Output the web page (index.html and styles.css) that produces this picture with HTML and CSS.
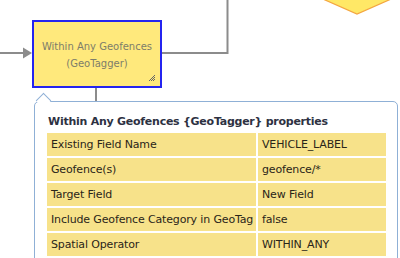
FILE: index.html
```html
<!DOCTYPE html>
<html>
<head>
<meta charset="utf-8">
<link rel="stylesheet" href="styles.css">
</head>
<body>
<div class="canvas">
  <svg class="wires" width="400" height="258" viewBox="0 0 400 258">
    <polygon class="diamond" points="316,-4 357,14 398,-4"/>
    <line class="wire" x1="0" y1="53" x2="25" y2="53"/>
    <polygon class="arrow" points="23,47.5 32,53 23,58.5"/>
    <polyline class="wire" points="162,53 227.5,53 227.5,0"/>
    <line class="wire" x1="96" y1="88" x2="96" y2="102"/>
  </svg>
  <div class="node">
    <div class="node-label">Within Any Geofences<br>(GeoTagger)</div>
    <svg class="grip" width="8" height="8" viewBox="0 0 8 8">
      <path d="M7 1 L1 7 M7 3 L3 7 M7 5 L5 7" stroke="#666" stroke-width="1"/>
    </svg>
  </div>
  <div class="popup">
    <div class="caret"></div>
    <div class="popup-title">Within Any Geofences {GeoTagger} properties</div>
    <table class="props">
      <colgroup><col class="c1"><col class="c2"></colgroup>
      <tr><td>Existing Field Name</td><td>VEHICLE_LABEL</td></tr>
      <tr><td>Geofence(s)</td><td>geofence/*</td></tr>
      <tr><td>Target Field</td><td>New Field</td></tr>
      <tr><td>Include Geofence Category in GeoTag</td><td>false</td></tr>
      <tr><td>Spatial Operator</td><td>WITHIN_ANY</td></tr>
      <tr><td></td><td></td></tr>
    </table>
  </div>
</div>
</body>
</html>
```
FILE: styles.css
```css
html, body {
  margin: 0;
  padding: 0;
  background: #fff;
  overflow: hidden;
}
.canvas {
  position: relative;
  width: 400px;
  height: 258px;
  overflow: hidden;
  font-family: "DejaVu Sans", Verdana, sans-serif;
}
.wires {
  position: absolute;
  left: 0;
  top: 0;
}
.wire {
  stroke: #8c8c8c;
  stroke-width: 2;
  fill: none;
}
.arrow {
  fill: #8c8c8c;
}
.diamond {
  fill: #ffe866;
  stroke: #f4a640;
  stroke-width: 1.2;
}
.node {
  position: absolute;
  left: 32px;
  top: 20px;
  width: 126px;
  height: 64px;
  border: 2px solid #2424f0;
  background: #ffe97c;
  display: flex;
  align-items: center;
  justify-content: center;
}
.node-label {
  color: #7d7d6a;
  font-size: 10px;
  line-height: 17px;
  text-align: center;
  margin-top: 2px;
}
.grip {
  position: absolute;
  right: 4px;
  bottom: 4px;
}
.popup {
  position: absolute;
  left: 34px;
  top: 101px;
  width: 362px;
  height: 200px;
  border: 1px solid #8fb0d6;
  border-radius: 5px;
  background: #fff;
}
.caret {
  position: absolute;
  left: 3px;
  top: -7px;
  width: 10px;
  height: 10px;
  background: #fff;
  border-left: 1px solid #8fb0d6;
  border-top: 1px solid #8fb0d6;
  transform: rotate(45deg);
}
.popup-title {
  margin: 13px 0 0 13px;
  font-weight: bold;
  font-size: 11px;
  color: #2d3142;
  letter-spacing: -0.25px;
}
.props {
  margin: 3px 0 0 10px;
  border-collapse: separate;
  border-spacing: 2px 2.25px;
  table-layout: fixed;
  width: 343px;
}
.c1 { width: 209px; }
.c2 { width: 128px; }
.props td {
  background: #f7e28a;
  height: 23px;
  padding: 0 0 0 4px;
  font-size: 11px;
  letter-spacing: -0.15px;
  color: #2a2519;
  white-space: nowrap;
  overflow: hidden;
  box-sizing: border-box;
}
```
